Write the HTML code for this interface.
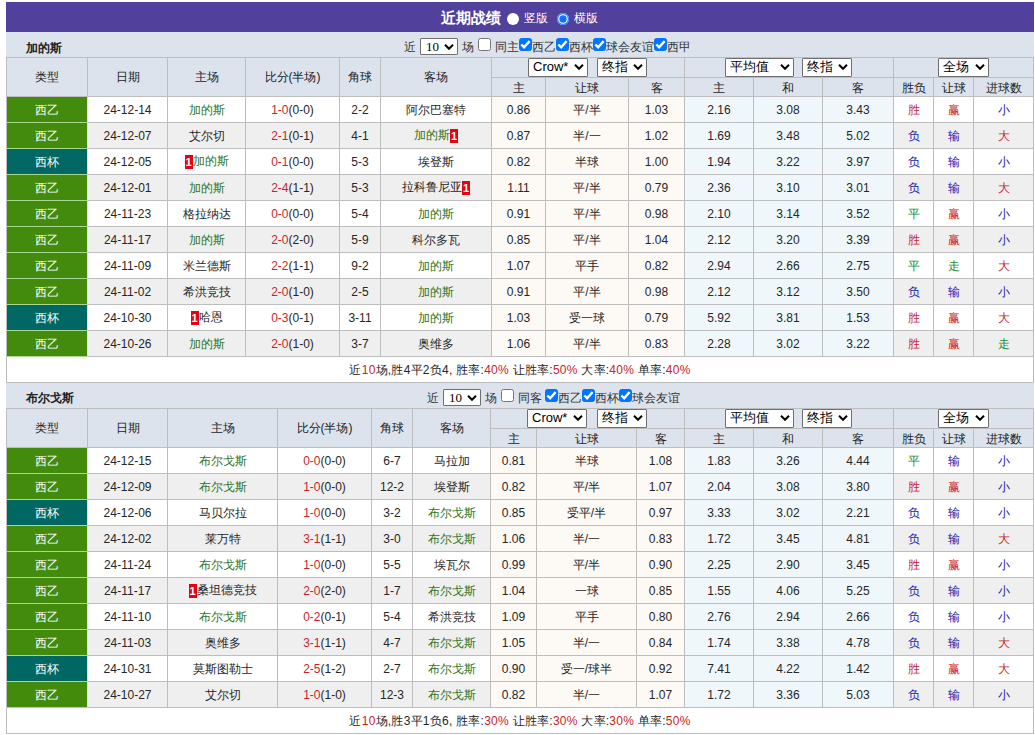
<!DOCTYPE html>
<html><head><meta charset="utf-8"><style>
*{box-sizing:border-box}
html,body{margin:0;padding:0;background:#fff;width:1035px;height:735px;overflow:hidden;font-family:"Liberation Sans",sans-serif;font-size:12px;color:#333;position:relative}
.title{position:absolute;left:6px;top:2px;width:1028px;height:30px;background:#51409c;color:#fff}
.ttl{position:absolute;left:441px;top:10px;font-size:15px;font-weight:bold;line-height:16px;color:#fff}
.radio{position:absolute;top:12.5px;width:12px;height:12px;border-radius:50%;background:#fff}
.radio.on{background:#0a74ff;box-shadow:inset 0 0 0 1.2px #2f7dff,inset 0 0 0 2.3px #fff}
.rl{position:absolute;top:11px;font-size:12px;line-height:14px;color:#fff}
.sec{position:absolute;left:6px;width:1028px;height:25px;background:#dce3ec}
.nm{position:absolute;font-weight:bold;color:#222;line-height:14px}
.ft{position:absolute;line-height:14px;color:#333;white-space:nowrap}
.sel{position:absolute;border:1px solid #6f6f6f;border-radius:1px;background:#fff;color:#000;font-size:13px;line-height:16px;white-space:nowrap}
.sel .st{position:absolute;left:4px;top:0}
.sel .ch{position:absolute;top:5px;line-height:0}
.sel svg{display:block}
.s10 .st{font-family:"Liberation Serif",serif;font-size:13px;left:5px;line-height:15px}
.cb{position:absolute;width:13px;height:13px;border:1px solid #767676;border-radius:2.5px;background:#fff}
.cb.on{background:#0075ff;border-color:#0075ff}
.cb svg{position:absolute;left:-1px;top:-1px}
.tb{position:absolute;left:6px;border-collapse:collapse;table-layout:fixed;width:1028px}
.tb td{border:1px solid #bdbdbd;text-align:center;padding:0;height:26px;line-height:14px;white-space:nowrap;overflow:hidden;color:#262626}
.tb .h1 td{background:#dce3ec;height:20px;color:#222}
.tb .h2 td{background:#dce3ec;height:19px;line-height:16px;padding-top:2px;color:#222}
.tb td.lg{background:#438b0d;color:#fff;border-top-color:#abd890;border-bottom-color:#abd890;border-right-color:#d6eacb}
.tb td.cup{background:#006763;color:#fff;border-top-color:#abd890;border-bottom-color:#abd890;border-right-color:#cfe6e2}
.tb tr.alt td{background:#efefef}
.tb tr.alt td.lg{background:#438b0d}
.tb tr.alt td.cup{background:#006763}
.tb td.oc, .tb tr.alt td.oc{background:#fdf9f5}
.tb td.ob, .tb tr.alt td.ob{background:#eff7fb}
.tg{color:#2f7526}
.sr{color:#cc1f2b}
.tb td.xb{color:#2020b0}
.tb td.xg{color:#1f8a1f}
.tb td.xr{color:#cc1c1c}
.rc{display:inline-block;font-style:normal;background:#e60010;color:#fff;font-weight:bold;width:8px;height:14px;line-height:14px;font-size:11px;vertical-align:middle;text-align:center}
.tb tr.sum td{background:#fff;height:26px;letter-spacing:0.25px}
b.r{font-weight:normal;color:#c9221e}
</style></head><body>
<div class="title"></div>
<div class="ttl">近期战绩</div><div class="radio" style="left:507px"></div><div class="rl" style="left:524px">竖版</div><div class="radio on" style="left:557px"></div><div class="rl" style="left:574px">横版</div>
<div class="sec" style="top:32px"></div><div class="nm" style="left:26px;top:41px">加的斯</div>
<table class="tb" style="top:57px">
<colgroup><col style="width:81px"><col style="width:80px"><col style="width:78px"><col style="width:94px"><col style="width:41px"><col style="width:111px"><col style="width:54px"><col style="width:83px"><col style="width:56px"><col style="width:69px"><col style="width:69px"><col style="width:71px"><col style="width:40px"><col style="width:40px"><col style="width:60px"></colgroup>
<tr class="h1"><td rowspan="2">类型</td><td rowspan="2">日期</td><td rowspan="2">主场</td><td rowspan="2">比分(半场)</td><td rowspan="2">角球</td><td rowspan="2">客场</td>
<td colspan="3"></td><td colspan="3"></td><td colspan="3"></td></tr>
<tr class="h2"><td>主</td><td>让球</td><td>客</td><td>主</td><td>和</td><td>客</td><td>胜负</td><td>让球</td><td>进球数</td></tr>
<tr><td class="lg">西乙</td><td>24-12-14</td><td><span class="tg">加的斯</span></td><td><span class="sr">1-0</span>(0-0)</td><td>2-2</td><td><span>阿尔巴塞特</span></td><td class="oc">0.86</td><td class="oc">平/半</td><td class="oc">1.03</td><td class="ob">2.16</td><td class="ob">3.08</td><td class="ob">3.43</td><td class="xr">胜</td><td class="xr">赢</td><td class="xb">小</td></tr>
<tr class="alt"><td class="lg">西乙</td><td>24-12-07</td><td><span>艾尔切</span></td><td><span class="sr">2-1</span>(0-1)</td><td>4-1</td><td><span class="tg">加的斯</span><i class="rc">1</i></td><td class="oc">0.87</td><td class="oc">半/一</td><td class="oc">1.02</td><td class="ob">1.69</td><td class="ob">3.48</td><td class="ob">5.02</td><td class="xb">负</td><td class="xb">输</td><td class="xr">大</td></tr>
<tr><td class="cup">西杯</td><td>24-12-05</td><td><i class="rc">1</i><span class="tg">加的斯</span></td><td><span class="sr">0-1</span>(0-0)</td><td>5-3</td><td><span>埃登斯</span></td><td class="oc">0.82</td><td class="oc">半球</td><td class="oc">1.00</td><td class="ob">1.94</td><td class="ob">3.22</td><td class="ob">3.97</td><td class="xb">负</td><td class="xb">输</td><td class="xb">小</td></tr>
<tr class="alt"><td class="lg">西乙</td><td>24-12-01</td><td><span class="tg">加的斯</span></td><td><span class="sr">2-4</span>(1-1)</td><td>5-3</td><td><span>拉科鲁尼亚</span><i class="rc">1</i></td><td class="oc">1.11</td><td class="oc">平/半</td><td class="oc">0.79</td><td class="ob">2.36</td><td class="ob">3.10</td><td class="ob">3.01</td><td class="xb">负</td><td class="xb">输</td><td class="xr">大</td></tr>
<tr><td class="lg">西乙</td><td>24-11-23</td><td><span>格拉纳达</span></td><td><span class="sr">0-0</span>(0-0)</td><td>5-4</td><td><span class="tg">加的斯</span></td><td class="oc">0.91</td><td class="oc">平/半</td><td class="oc">0.98</td><td class="ob">2.10</td><td class="ob">3.14</td><td class="ob">3.52</td><td class="xg">平</td><td class="xr">赢</td><td class="xb">小</td></tr>
<tr class="alt"><td class="lg">西乙</td><td>24-11-17</td><td><span class="tg">加的斯</span></td><td><span class="sr">2-0</span>(2-0)</td><td>5-9</td><td><span>科尔多瓦</span></td><td class="oc">0.85</td><td class="oc">平/半</td><td class="oc">1.04</td><td class="ob">2.12</td><td class="ob">3.20</td><td class="ob">3.39</td><td class="xr">胜</td><td class="xr">赢</td><td class="xb">小</td></tr>
<tr><td class="lg">西乙</td><td>24-11-09</td><td><span>米兰德斯</span></td><td><span class="sr">2-2</span>(1-1)</td><td>9-2</td><td><span class="tg">加的斯</span></td><td class="oc">1.07</td><td class="oc">平手</td><td class="oc">0.82</td><td class="ob">2.94</td><td class="ob">2.66</td><td class="ob">2.75</td><td class="xg">平</td><td class="xg">走</td><td class="xr">大</td></tr>
<tr class="alt"><td class="lg">西乙</td><td>24-11-02</td><td><span>希洪竞技</span></td><td><span class="sr">2-0</span>(1-0)</td><td>2-5</td><td><span class="tg">加的斯</span></td><td class="oc">0.91</td><td class="oc">平/半</td><td class="oc">0.98</td><td class="ob">2.12</td><td class="ob">3.12</td><td class="ob">3.50</td><td class="xb">负</td><td class="xb">输</td><td class="xb">小</td></tr>
<tr><td class="cup">西杯</td><td>24-10-30</td><td><i class="rc">1</i><span>哈恩</span></td><td><span class="sr">0-3</span>(0-1)</td><td>3-11</td><td><span class="tg">加的斯</span></td><td class="oc">1.03</td><td class="oc">受一球</td><td class="oc">0.79</td><td class="ob">5.92</td><td class="ob">3.81</td><td class="ob">1.53</td><td class="xr">胜</td><td class="xr">赢</td><td class="xr">大</td></tr>
<tr class="alt"><td class="lg">西乙</td><td>24-10-26</td><td><span class="tg">加的斯</span></td><td><span class="sr">2-0</span>(1-0)</td><td>3-7</td><td><span>奥维多</span></td><td class="oc">1.06</td><td class="oc">平/半</td><td class="oc">0.83</td><td class="ob">2.28</td><td class="ob">3.02</td><td class="ob">3.22</td><td class="xr">胜</td><td class="xr">赢</td><td class="xg">走</td></tr>
<tr class="sum"><td colspan="15">近<b class="r">10</b>场,胜4平2负4, 胜率:<b class="r">40%</b> 让胜率:<b class="r">50%</b> 大率:<b class="r">40%</b> 单率:<b class="r">40%</b></td></tr>
</table>
<div class="sec" style="top:383px"></div><div class="nm" style="left:26px;top:391px">布尔戈斯</div>
<table class="tb" style="top:408px">
<colgroup><col style="width:81px"><col style="width:80px"><col style="width:110px"><col style="width:94px"><col style="width:41px"><col style="width:78px"><col style="width:46px"><col style="width:100px"><col style="width:48px"><col style="width:69px"><col style="width:69px"><col style="width:71px"><col style="width:40px"><col style="width:40px"><col style="width:60px"></colgroup>
<tr class="h1"><td rowspan="2">类型</td><td rowspan="2">日期</td><td rowspan="2">主场</td><td rowspan="2">比分(半场)</td><td rowspan="2">角球</td><td rowspan="2">客场</td>
<td colspan="3"></td><td colspan="3"></td><td colspan="3"></td></tr>
<tr class="h2"><td>主</td><td>让球</td><td>客</td><td>主</td><td>和</td><td>客</td><td>胜负</td><td>让球</td><td>进球数</td></tr>
<tr><td class="lg">西乙</td><td>24-12-15</td><td><span class="tg">布尔戈斯</span></td><td><span class="sr">0-0</span>(0-0)</td><td>6-7</td><td><span>马拉加</span></td><td class="oc">0.81</td><td class="oc">半球</td><td class="oc">1.08</td><td class="ob">1.83</td><td class="ob">3.26</td><td class="ob">4.44</td><td class="xg">平</td><td class="xb">输</td><td class="xb">小</td></tr>
<tr class="alt"><td class="lg">西乙</td><td>24-12-09</td><td><span class="tg">布尔戈斯</span></td><td><span class="sr">1-0</span>(0-0)</td><td>12-2</td><td><span>埃登斯</span></td><td class="oc">0.82</td><td class="oc">平/半</td><td class="oc">1.07</td><td class="ob">2.04</td><td class="ob">3.08</td><td class="ob">3.80</td><td class="xr">胜</td><td class="xr">赢</td><td class="xb">小</td></tr>
<tr><td class="cup">西杯</td><td>24-12-06</td><td><span>马贝尔拉</span></td><td><span class="sr">1-0</span>(0-0)</td><td>3-2</td><td><span class="tg">布尔戈斯</span></td><td class="oc">0.85</td><td class="oc">受平/半</td><td class="oc">0.97</td><td class="ob">3.33</td><td class="ob">3.02</td><td class="ob">2.21</td><td class="xb">负</td><td class="xb">输</td><td class="xb">小</td></tr>
<tr class="alt"><td class="lg">西乙</td><td>24-12-02</td><td><span>莱万特</span></td><td><span class="sr">3-1</span>(1-1)</td><td>3-0</td><td><span class="tg">布尔戈斯</span></td><td class="oc">1.06</td><td class="oc">半/一</td><td class="oc">0.83</td><td class="ob">1.72</td><td class="ob">3.45</td><td class="ob">4.81</td><td class="xb">负</td><td class="xb">输</td><td class="xr">大</td></tr>
<tr><td class="lg">西乙</td><td>24-11-24</td><td><span class="tg">布尔戈斯</span></td><td><span class="sr">1-0</span>(0-0)</td><td>5-5</td><td><span>埃瓦尔</span></td><td class="oc">0.99</td><td class="oc">平/半</td><td class="oc">0.90</td><td class="ob">2.25</td><td class="ob">2.90</td><td class="ob">3.45</td><td class="xr">胜</td><td class="xr">赢</td><td class="xb">小</td></tr>
<tr class="alt"><td class="lg">西乙</td><td>24-11-17</td><td><i class="rc">1</i><span>桑坦德竞技</span></td><td><span class="sr">2-0</span>(2-0)</td><td>1-7</td><td><span class="tg">布尔戈斯</span></td><td class="oc">1.04</td><td class="oc">一球</td><td class="oc">0.85</td><td class="ob">1.55</td><td class="ob">4.06</td><td class="ob">5.25</td><td class="xb">负</td><td class="xb">输</td><td class="xb">小</td></tr>
<tr><td class="lg">西乙</td><td>24-11-10</td><td><span class="tg">布尔戈斯</span></td><td><span class="sr">0-2</span>(0-1)</td><td>5-4</td><td><span>希洪竞技</span></td><td class="oc">1.09</td><td class="oc">平手</td><td class="oc">0.80</td><td class="ob">2.76</td><td class="ob">2.94</td><td class="ob">2.66</td><td class="xb">负</td><td class="xb">输</td><td class="xb">小</td></tr>
<tr class="alt"><td class="lg">西乙</td><td>24-11-03</td><td><span>奥维多</span></td><td><span class="sr">3-1</span>(1-1)</td><td>4-7</td><td><span class="tg">布尔戈斯</span></td><td class="oc">1.05</td><td class="oc">半/一</td><td class="oc">0.84</td><td class="ob">1.74</td><td class="ob">3.38</td><td class="ob">4.78</td><td class="xb">负</td><td class="xb">输</td><td class="xr">大</td></tr>
<tr><td class="cup">西杯</td><td>24-10-31</td><td><span>莫斯图勒士</span></td><td><span class="sr">2-5</span>(1-2)</td><td>2-7</td><td><span class="tg">布尔戈斯</span></td><td class="oc">0.90</td><td class="oc">受一/球半</td><td class="oc">0.92</td><td class="ob">7.41</td><td class="ob">4.22</td><td class="ob">1.42</td><td class="xr">胜</td><td class="xr">赢</td><td class="xr">大</td></tr>
<tr class="alt"><td class="lg">西乙</td><td>24-10-27</td><td><span>艾尔切</span></td><td><span class="sr">1-0</span>(1-0)</td><td>12-3</td><td><span class="tg">布尔戈斯</span></td><td class="oc">0.82</td><td class="oc">半/一</td><td class="oc">1.07</td><td class="ob">1.72</td><td class="ob">3.36</td><td class="ob">5.03</td><td class="xb">负</td><td class="xb">输</td><td class="xb">小</td></tr>
<tr class="sum"><td colspan="15">近<b class="r">10</b>场,胜3平1负6, 胜率:<b class="r">30%</b> 让胜率:<b class="r">30%</b> 大率:<b class="r">30%</b> 单率:<b class="r">50%</b></td></tr>
</table>
<div class="ft" style="left:404px;top:40px">近</div><div class="sel s10" style="left:420px;top:38px;width:38px;height:17px"><span class="st">10</span><span class="ch" style="left:23px"><svg width="10" height="6" viewBox="0 0 10 6"><path d="M1 0.8 L5 4.8 L9 0.8" fill="none" stroke="#000" stroke-width="2"/></svg></span></div><div class="ft" style="left:462px;top:40px">场</div><div class="cb" style="left:478px;top:38px"></div><div class="ft" style="left:495px;top:40px">同主</div><div class="cb on" style="left:519px;top:38px"><svg width="13" height="13" viewBox="0 0 13 13"><path d="M2.3 6.5 L5.1 9.2 L10.6 3.1" fill="none" stroke="#fff" stroke-width="2.4"/></svg></div><div class="ft" style="left:532px;top:40px">西乙</div><div class="cb on" style="left:556px;top:38px"><svg width="13" height="13" viewBox="0 0 13 13"><path d="M2.3 6.5 L5.1 9.2 L10.6 3.1" fill="none" stroke="#fff" stroke-width="2.4"/></svg></div><div class="ft" style="left:569px;top:40px">西杯</div><div class="cb on" style="left:593px;top:38px"><svg width="13" height="13" viewBox="0 0 13 13"><path d="M2.3 6.5 L5.1 9.2 L10.6 3.1" fill="none" stroke="#fff" stroke-width="2.4"/></svg></div><div class="ft" style="left:606px;top:40px">球会友谊</div><div class="cb on" style="left:654px;top:38px"><svg width="13" height="13" viewBox="0 0 13 13"><path d="M2.3 6.5 L5.1 9.2 L10.6 3.1" fill="none" stroke="#fff" stroke-width="2.4"/></svg></div><div class="ft" style="left:667px;top:40px">西甲</div><div class="ft" style="left:427px;top:391px">近</div><div class="sel s10" style="left:443px;top:389px;width:38px;height:17px"><span class="st">10</span><span class="ch" style="left:23px"><svg width="10" height="6" viewBox="0 0 10 6"><path d="M1 0.8 L5 4.8 L9 0.8" fill="none" stroke="#000" stroke-width="2"/></svg></span></div><div class="ft" style="left:485px;top:391px">场</div><div class="cb" style="left:501px;top:389px"></div><div class="ft" style="left:518px;top:391px">同客</div><div class="cb on" style="left:545px;top:389px"><svg width="13" height="13" viewBox="0 0 13 13"><path d="M2.3 6.5 L5.1 9.2 L10.6 3.1" fill="none" stroke="#fff" stroke-width="2.4"/></svg></div><div class="ft" style="left:558px;top:391px">西乙</div><div class="cb on" style="left:582px;top:389px"><svg width="13" height="13" viewBox="0 0 13 13"><path d="M2.3 6.5 L5.1 9.2 L10.6 3.1" fill="none" stroke="#fff" stroke-width="2.4"/></svg></div><div class="ft" style="left:595px;top:391px">西杯</div><div class="cb on" style="left:619px;top:389px"><svg width="13" height="13" viewBox="0 0 13 13"><path d="M2.3 6.5 L5.1 9.2 L10.6 3.1" fill="none" stroke="#fff" stroke-width="2.4"/></svg></div><div class="ft" style="left:632px;top:391px">球会友谊</div>
<div class="sel " style="left:528px;top:58px;width:60px;height:19px"><span class="st">Crow*</span><span class="ch" style="left:45px"><svg width="10" height="6" viewBox="0 0 10 6"><path d="M1 0.8 L5 4.8 L9 0.8" fill="none" stroke="#000" stroke-width="2"/></svg></span></div><div class="sel " style="left:597px;top:58px;width:50px;height:19px"><span class="st">终指</span><span class="ch" style="left:35px"><svg width="10" height="6" viewBox="0 0 10 6"><path d="M1 0.8 L5 4.8 L9 0.8" fill="none" stroke="#000" stroke-width="2"/></svg></span></div><div class="sel " style="left:725px;top:58px;width:69px;height:19px"><span class="st">平均值</span><span class="ch" style="left:54px"><svg width="10" height="6" viewBox="0 0 10 6"><path d="M1 0.8 L5 4.8 L9 0.8" fill="none" stroke="#000" stroke-width="2"/></svg></span></div><div class="sel " style="left:802px;top:58px;width:50px;height:19px"><span class="st">终指</span><span class="ch" style="left:35px"><svg width="10" height="6" viewBox="0 0 10 6"><path d="M1 0.8 L5 4.8 L9 0.8" fill="none" stroke="#000" stroke-width="2"/></svg></span></div><div class="sel " style="left:938px;top:58px;width:51px;height:19px"><span class="st">全场</span><span class="ch" style="left:36px"><svg width="10" height="6" viewBox="0 0 10 6"><path d="M1 0.8 L5 4.8 L9 0.8" fill="none" stroke="#000" stroke-width="2"/></svg></span></div><div class="sel " style="left:527px;top:409px;width:60px;height:19px"><span class="st">Crow*</span><span class="ch" style="left:45px"><svg width="10" height="6" viewBox="0 0 10 6"><path d="M1 0.8 L5 4.8 L9 0.8" fill="none" stroke="#000" stroke-width="2"/></svg></span></div><div class="sel " style="left:597px;top:409px;width:50px;height:19px"><span class="st">终指</span><span class="ch" style="left:35px"><svg width="10" height="6" viewBox="0 0 10 6"><path d="M1 0.8 L5 4.8 L9 0.8" fill="none" stroke="#000" stroke-width="2"/></svg></span></div><div class="sel " style="left:725px;top:409px;width:69px;height:19px"><span class="st">平均值</span><span class="ch" style="left:54px"><svg width="10" height="6" viewBox="0 0 10 6"><path d="M1 0.8 L5 4.8 L9 0.8" fill="none" stroke="#000" stroke-width="2"/></svg></span></div><div class="sel " style="left:802px;top:409px;width:50px;height:19px"><span class="st">终指</span><span class="ch" style="left:35px"><svg width="10" height="6" viewBox="0 0 10 6"><path d="M1 0.8 L5 4.8 L9 0.8" fill="none" stroke="#000" stroke-width="2"/></svg></span></div><div class="sel " style="left:938px;top:409px;width:51px;height:19px"><span class="st">全场</span><span class="ch" style="left:36px"><svg width="10" height="6" viewBox="0 0 10 6"><path d="M1 0.8 L5 4.8 L9 0.8" fill="none" stroke="#000" stroke-width="2"/></svg></span></div>
</body></html>
